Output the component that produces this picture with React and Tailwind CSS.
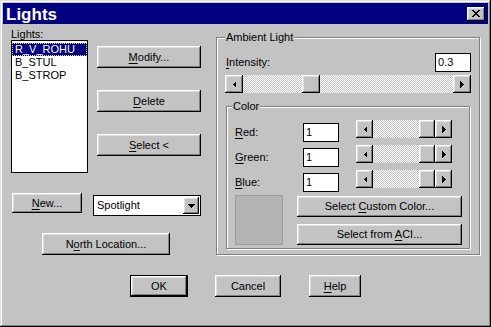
import React from 'react'

// Win95-style bevels
const raised =
  'shadow-[inset_-1px_-1px_#000,inset_1px_1px_#fff,inset_-2px_-2px_#808080,inset_2px_2px_#dfdfdf]'
const etched = 'border border-[#808080] shadow-[inset_1px_1px_#fff,1px_1px_#fff]'

function Tri({ dir }) {
  const pts = {
    left: '4,0 4,7 0.5,3.5',
    right: '0,0 0,7 3.5,3.5',
    down: '0,0 7,0 3.5,4',
  }[dir]
  const w = dir === 'down' ? 7 : 4
  const h = dir === 'down' ? 4 : 7
  return (
    <svg width={w} height={h} viewBox={`0 0 ${w} ${h}`} shapeRendering="crispEdges">
      <polygon points={pts} fill="#000" />
    </svg>
  )
}

function Btn({ children, className = '' }) {
  return (
    <div className={`flex items-center justify-center bg-[#c3c3c3] text-black ${raised} ${className}`}>
      <span>{children}</span>
    </div>
  )
}

function U({ children }) {
  return <span className="underline underline-offset-[2px]">{children}</span>
}

function Scroll({ className = '', thumb, arrowW = 'w-[18px]' }) {
  return (
    <div className={`flex ${className}`}>
      <div className={`${arrowW} h-full flex items-center justify-center bg-[#c3c3c3] ${raised}`}>
        <Tri dir="left" />
      </div>
      <div className="flex flex-1 h-full bg-[repeating-conic-gradient(#c3c3c3_0_25%,#fff_0_50%)] bg-[length:2px_2px]">
        <div className={`h-full bg-[#c3c3c3] ${raised} ${thumb}`} />
      </div>
      <div className={`${arrowW} h-full flex items-center justify-center bg-[#c3c3c3] ${raised}`}>
        <Tri dir="right" />
      </div>
    </div>
  )
}

function Field({ value, className = '' }) {
  return (
    <div className={`bg-white border border-black pl-[2px] leading-[17px] ${className}`}>{value}</div>
  )
}

function ColorRow({ label, mn }) {
  return (
    <div className="flex items-start h-[22px]">
      <div className="w-[68px] mt-[3px] leading-[19px]">
        <U>{mn}</U>
        {label.slice(1)}:
      </div>
      <Field value="1" className="w-[36px] h-[19px] mt-[3px]" />
      <Scroll className="ml-[17px] w-[96px] h-[18px]" arrowW="w-[17px]" thumb="ml-auto w-[16px]" />
    </div>
  )
}

export default function App() {
  return (
    <div className="w-[491px] h-[327px] bg-[#c3c3c3] p-[3px] text-[11px] text-black font-['Liberation_Sans',Arial,sans-serif] shadow-[inset_-1px_-1px_#000,inset_1px_1px_#dfdfdf,inset_-2px_-2px_#808080,inset_2px_2px_#fff]">
      {/* title bar */}
      <div className="h-[21px] bg-[#000080] flex items-center justify-between pl-[3px] pr-[3px]">
        <span className="text-white font-bold text-[17px] leading-[21px] pt-[1px]">Lights</span>
        <div className={`w-[18px] h-[14px] flex items-center justify-center bg-[#c3c3c3] ${raised}`}>
          <svg width="8" height="7" viewBox="0 0 8 7" shapeRendering="crispEdges">
            <path d="M0.5 0 L7.5 7 M7.5 0 L0.5 7" stroke="#000" strokeWidth="1.8" />
          </svg>
        </div>
      </div>

      <div className="flex">
        {/* left column */}
        <div className="ml-[8px] w-[190px] flex flex-col">
          <div className="mt-[5px] h-[11px] leading-[11px]">Lights:</div>
          <div className="flex">
            <div className="w-[77px] h-[133px] bg-white border border-black pt-[2px] text-[11px] leading-[13px]">
              <div className="h-[13px] bg-[#000080] text-white pl-[3px] outline-1 outline-dotted outline-[#e0e080] -outline-offset-1">
                R_V_ROHU
              </div>
              <div className="h-[13px] pl-[3px]">B_STUL</div>
              <div className="h-[13px] pl-[3px]">B_STROP</div>
            </div>
            <div className="ml-[9px] mt-[6px] w-[104px] flex flex-col gap-[22px]">
              <Btn className="h-[22px]">
                <U>M</U>odify...
              </Btn>
              <Btn className="h-[22px]">
                <U>D</U>elete
              </Btn>
              <Btn className="h-[22px]">
                <U>S</U>elect &lt;
              </Btn>
            </div>
          </div>
          <div className="flex items-start mt-[20px] h-[23px]">
            <Btn className="ml-[1px] w-[70px] h-[20px]">
              <U>N</U>ew...
            </Btn>
            <div className="ml-[11px] mt-[2px] w-[108px] h-[21px] bg-white border border-black flex items-center justify-between pl-[3px] pr-[1px]">
              <span>Spotlight</span>
              <div className={`w-[16px] h-[17px] flex items-center justify-center bg-[#c3c3c3] ${raised}`}>
                <Tri dir="down" />
              </div>
            </div>
          </div>
          <Btn className="mt-[17px] ml-[31px] w-[128px] h-[22px]">
            N<U>o</U>rth Location...
          </Btn>
        </div>

        {/* ambient light group */}
        <div className={`ml-[15px] mt-[13px] w-[264px] h-[218px] px-[8px] ${etched}`}>
          <div className="-mt-[7px] ml-[0px] w-fit px-[1px] bg-[#c3c3c3] h-[12px] leading-[12px]">
            Ambient Light
          </div>
          <div className="mt-[10px] flex items-start justify-between h-[19px]">
            <div className="ml-[1px] leading-[19px]">
              <U>I</U>ntensity:
            </div>
            <Field value="0.3" className="w-[36px] h-[19px]" />
          </div>
          <Scroll className="mt-[3px] w-[246px] h-[18px]" thumb="ml-[59px] w-[18px]" />

          {/* color group */}
          <div className={`mt-[13px] ml-[1px] w-[244px] h-[143px] ${etched}`}>
            <div className="-mt-[7px] ml-[5px] w-fit px-[1px] bg-[#c3c3c3] h-[12px] leading-[12px]">Color</div>
            <div className="pl-[8px] mt-[8px] flex flex-col gap-[3px]">
              <ColorRow label="Red" mn="R" />
              <ColorRow label="Green" mn="G" />
              <ColorRow label="Blue" mn="B" />
              <div className="flex items-start">
                <div className="w-[48px] h-[50px] bg-[#b3b3b3] border border-[#9a9a9a]" />
                <div className="ml-[14px] mt-[1px] flex flex-col gap-[7px]">
                  <Btn className="w-[165px] h-[21px]">
                    Select <U>C</U>ustom Color...
                  </Btn>
                  <Btn className="w-[165px] h-[21px]">
                    Select from <U>A</U>CI...
                  </Btn>
                </div>
              </div>
            </div>
          </div>
        </div>
      </div>

      {/* bottom buttons */}
      <div className="flex mt-[20px]">
        <div className="ml-[127px] w-[58px] h-[22px] border border-black">
          <Btn className="w-full h-full">OK</Btn>
        </div>
        <Btn className="ml-[27px] w-[66px] h-[22px]">Cancel</Btn>
        <Btn className="ml-[28px] w-[52px] h-[22px]">
          <U>H</U>elp
        </Btn>
      </div>
    </div>
  )
}
